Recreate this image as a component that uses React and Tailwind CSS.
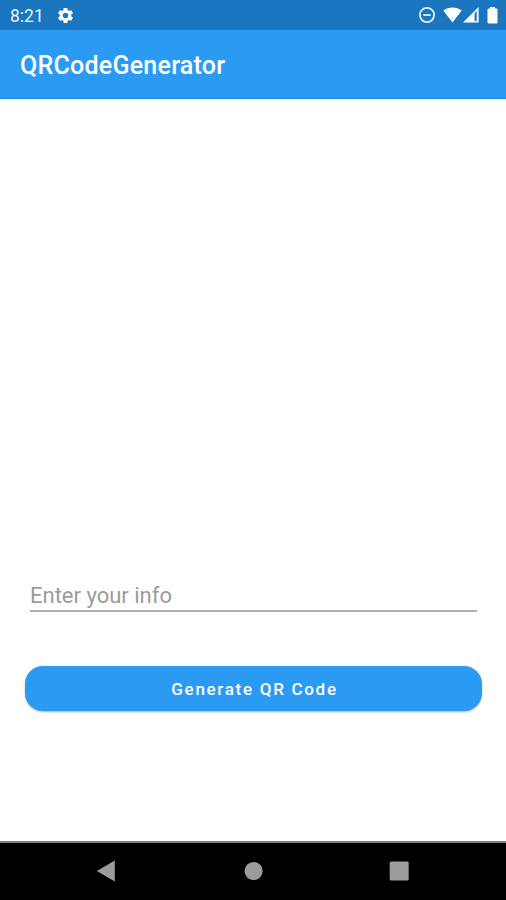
import React, { useState } from "react";
import { MdSettings } from "react-icons/md";

const StatusBar = () => (
  <div className="h-[30px] bg-[#1976bf] flex items-center justify-between pl-[10px] pr-[8px] text-white">
    <div className="flex items-center">
      <span className="w-[46px] text-[17.5px] leading-[30px] pt-[2px] text-[#e4f1fb]">8:21</span>
      <MdSettings className="w-[19px] h-[19px]" />
    </div>
    <div className="flex items-center">
      {/* Do not disturb */}
      <svg width="16" height="16" viewBox="0 0 16 16" fill="none" stroke="#e4f1fb" strokeWidth="1.8">
        <circle cx="8" cy="8" r="7.1" />
        <path d="M4.3 8h7.4" />
      </svg>
      {/* Wifi */}
      <svg className="ml-[8px]" width="19" height="16" viewBox="0 0 19 16" fill="currentColor">
        <path d="M0.3 3.6C5.5-0.5 13.5-0.5 18.7 3.6L9.5 15.4z" />
      </svg>
      {/* Signal */}
      <svg className="ml-[1px]" width="16" height="16" viewBox="0 0 16 16" fill="currentColor">
        <path fillRule="evenodd" d="M0 15.5L15.6 0V15.5zM11.6 6V14h2.1V3.9z" />
      </svg>
      {/* Battery */}
      <svg className="ml-[8px]" width="11" height="17" viewBox="0 0 11 17" fill="currentColor">
        <path d="M3 0h5v1.5h1.2a1.3 1.3 0 0 1 1.3 1.3v12.5a1.3 1.3 0 0 1-1.3 1.3H1.8a1.3 1.3 0 0 1-1.3-1.3V2.8a1.3 1.3 0 0 1 1.3-1.3H3z" />
      </svg>
    </div>
  </div>
);

const NavBar = () => (
  <div className="h-[59px] bg-black border-t-2 border-[#808080] flex text-[#9c9c9c] pt-[17px]">
    <svg className="ml-[96px]" width="20" height="22" viewBox="0 0 20 22" fill="currentColor">
      <path d="M18.8 0.6V21.4L0.8 11z" />
    </svg>
    <svg className="ml-[128px]" width="20" height="22" viewBox="0 0 20 22" fill="currentColor">
      <circle cx="9.6" cy="11" r="9.1" />
    </svg>
    <svg className="ml-[125px]" width="20" height="22" viewBox="0 0 20 22" fill="currentColor">
      <rect x="0.7" y="1.5" width="19" height="19" rx="1.5" />
    </svg>
  </div>
);

const App = () => {
  const [info, setInfo] = useState("");

  return (
    <div className="h-[900px] w-full bg-white flex flex-col overflow-hidden font-['Roboto',sans-serif]">
      <StatusBar />

      {/* App bar */}
      <div className="h-[69px] bg-[#2b9af3] border-b border-[#1f8de6] px-[20px] flex items-center">
        <h1 className="text-[25px] font-medium text-white leading-[30px] pt-[4px] tracking-[0.25px]">
          QRCodeGenerator
        </h1>
      </div>

      {/* Form */}
      <div className="flex-1 flex flex-col pl-[25px] pr-[24px] pt-[476px]">
        <input
          className="mx-[5px] h-[37px] pt-[5px] border-b-2 border-[#b0b0b0] text-[22px] text-gray-800 placeholder:text-[#9b9b9b] outline-none"
          placeholder="Enter your info"
          value={info}
          onChange={(e) => setInfo(e.target.value)}
        />
        <button className="mt-[54px] h-[45px] pt-[2px] pl-[2px] rounded-[18px] bg-[#2b9af3] text-white text-[17px] font-medium tracking-[1.7px] shadow-[0_1px_2px_rgba(0,0,0,0.3)]">
          Generate QR Code
        </button>
      </div>

      <NavBar />
    </div>
  );
};

export default App;
